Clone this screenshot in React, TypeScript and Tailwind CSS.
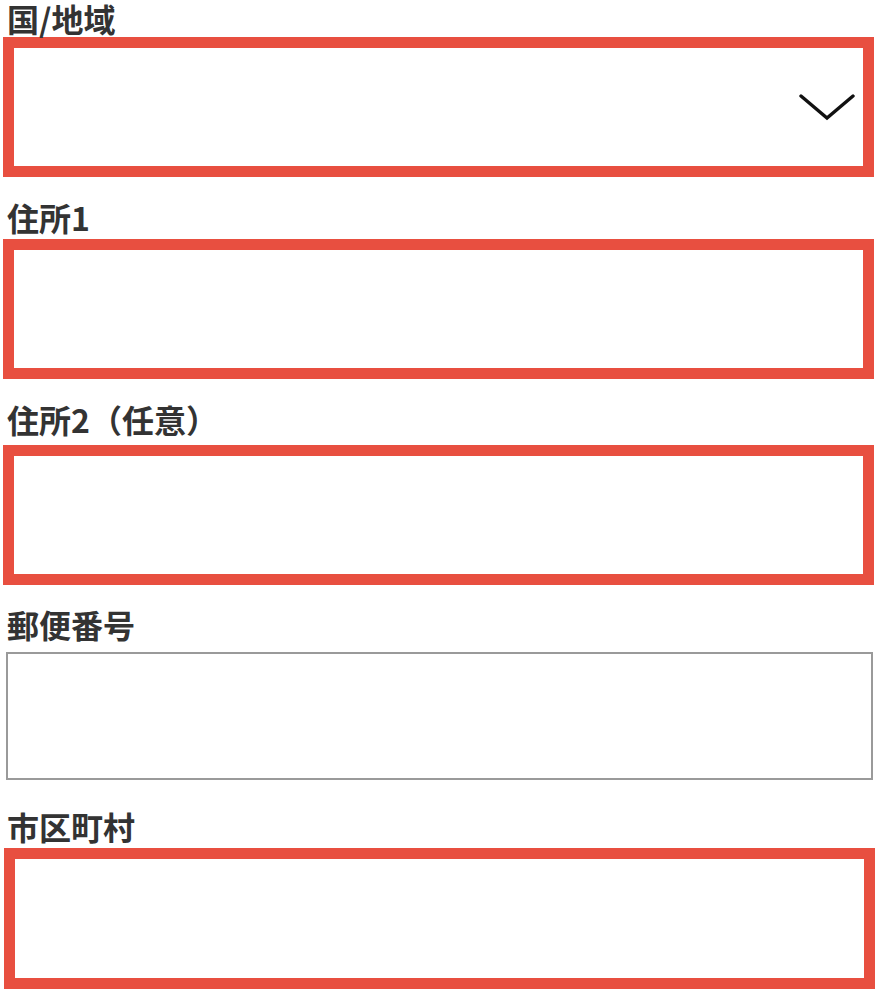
const labelClass = "h-[34px] pl-[4px] text-[32px] font-bold leading-[34px] text-[#333333]";
const redBox = "h-[140px] w-[871px] border-[11px] border-[#e84f40] bg-white";

const Field = ({ label, className, children }: { label: string; className?: string; children?: React.ReactNode }) => (
    <div className={className}>
        <div className={labelClass}>{label}</div>
        {children}
    </div>
);

const App = () => {
    return (
        <div className="h-[999px] w-[892px] bg-white pl-[3px] pt-[1px]" style={{ fontFamily: '"Noto Sans CJK JP", "Noto Sans", sans-serif' }}>
            {/* 国/地域 select */}
            <Field label="国/地域">
                <div className={`${redBox} mt-[2px] flex items-center justify-end pr-[8px]`}>
                    <svg width="56" height="28" viewBox="0 0 56 28" fill="none">
                        <path d="M2 3 L28 25 L54 3" stroke="#111" strokeWidth="3.4" strokeLinecap="round" />
                    </svg>
                </div>
            </Field>

            <Field label="住所1" className="mt-[23px]">
                <div className={`${redBox} mt-[5px]`} />
            </Field>

            <Field label="住所2（任意）" className="mt-[23px]">
                <div className={`${redBox} mt-[9px] h-[139px]`} />
            </Field>

            {/* no error on this one */}
            <Field label="郵便番号" className="mt-[22px]">
                <div className="ml-[3px] mt-[11px] h-[128px] w-[867px] border-2 border-[#9a9a9a] bg-white" />
            </Field>

            <Field label="市区町村" className="mt-[29px]">
                <div className={`${redBox} ml-[1px] mt-[5px] h-[141px]`} />
            </Field>
        </div>
    );
};

export default App;
